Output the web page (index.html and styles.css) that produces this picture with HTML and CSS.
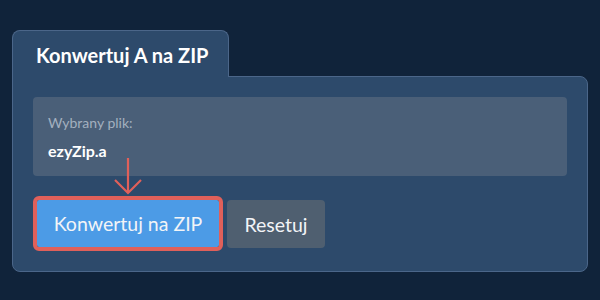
FILE: index.html
```html
<!DOCTYPE html>
<html lang="pl">
<head>
  <meta charset="UTF-8" />
  <title>Konwertuj A na ZIP</title>
  <link rel="stylesheet" href="styles.css">
</head>
<body>
  <div class="converter">
    <div class="tab">Konwertuj A na ZIP</div>
    <div class="panel">
      <div class="file-box">
        <div class="file-label">Wybrany plik:</div>
        <div class="file-name">ezyZip.a</div>
      </div>
      <div class="actions">
        <svg class="arrow" width="30" height="38" viewBox="0 0 30 38">
          <path d="M15 0 V35 M2 22 L15 35 L28 22" fill="none" stroke="#e0605a" stroke-width="2.2" />
        </svg>
        <button class="btn btn-convert">Konwertuj na ZIP</button>
        <button class="btn btn-reset">Resetuj</button>
      </div>
    </div>
  </div>
</body>
</html>
```

FILE: styles.css
```css
body {
  margin: 0;
  background: #10233a;
  font-family: Lato, 'Open Sans', sans-serif;
  color: #fff;
}

.converter {
  padding: 30px 12px 0 12px;
}

.tab {
  display: inline-block;
  position: relative;
  z-index: 1;
  background: #2d4a6b;
  border: 1px solid #4b6689;
  border-bottom: none;
  border-radius: 8px 8px 0 0;
  padding: 0 20px 0 23px;
  height: 46px;
  line-height: 48px;
  font-size: 20px;
  font-weight: bold;
  margin-bottom: -1px;
}

.panel {
  background: #2d4a6b;
  border: 1px solid #4b6689;
  border-radius: 0 8px 8px 8px;
  padding: 20px 20px 23px 20px;
}

.file-box {
  background: #4a5f78;
  border-radius: 4px;
  padding: 17px 15px 15px 15px;
}

.file-label {
  font-size: 14px;
  color: #a3b0bf;
  line-height: 18px;
}

.file-name {
  font-size: 16px;
  font-weight: bold;
  margin-top: 9px;
  line-height: 20px;
}

.actions {
  position: relative;
  display: flex;
  gap: 8px;
  margin-top: 24px;
}

.arrow {
  position: absolute;
  left: 80px;
  top: -42px;
}

.btn {
  font-family: Lato, 'Open Sans', sans-serif;
  font-size: 19.5px;
  color: #f2f4f7;
  border: none;
  border-radius: 4px;
  height: 48px;
  padding: 0;
  white-space: nowrap;
  cursor: pointer;
}

.btn-convert {
  background: #4c9be6;
  width: 182px;
  margin-left: 4px;
  height: 47px;
  outline: 4px solid #e0605a;
  border-radius: 2px;
}

.btn-reset {
  background: #4f5f70;
  width: 98px;
}
```
